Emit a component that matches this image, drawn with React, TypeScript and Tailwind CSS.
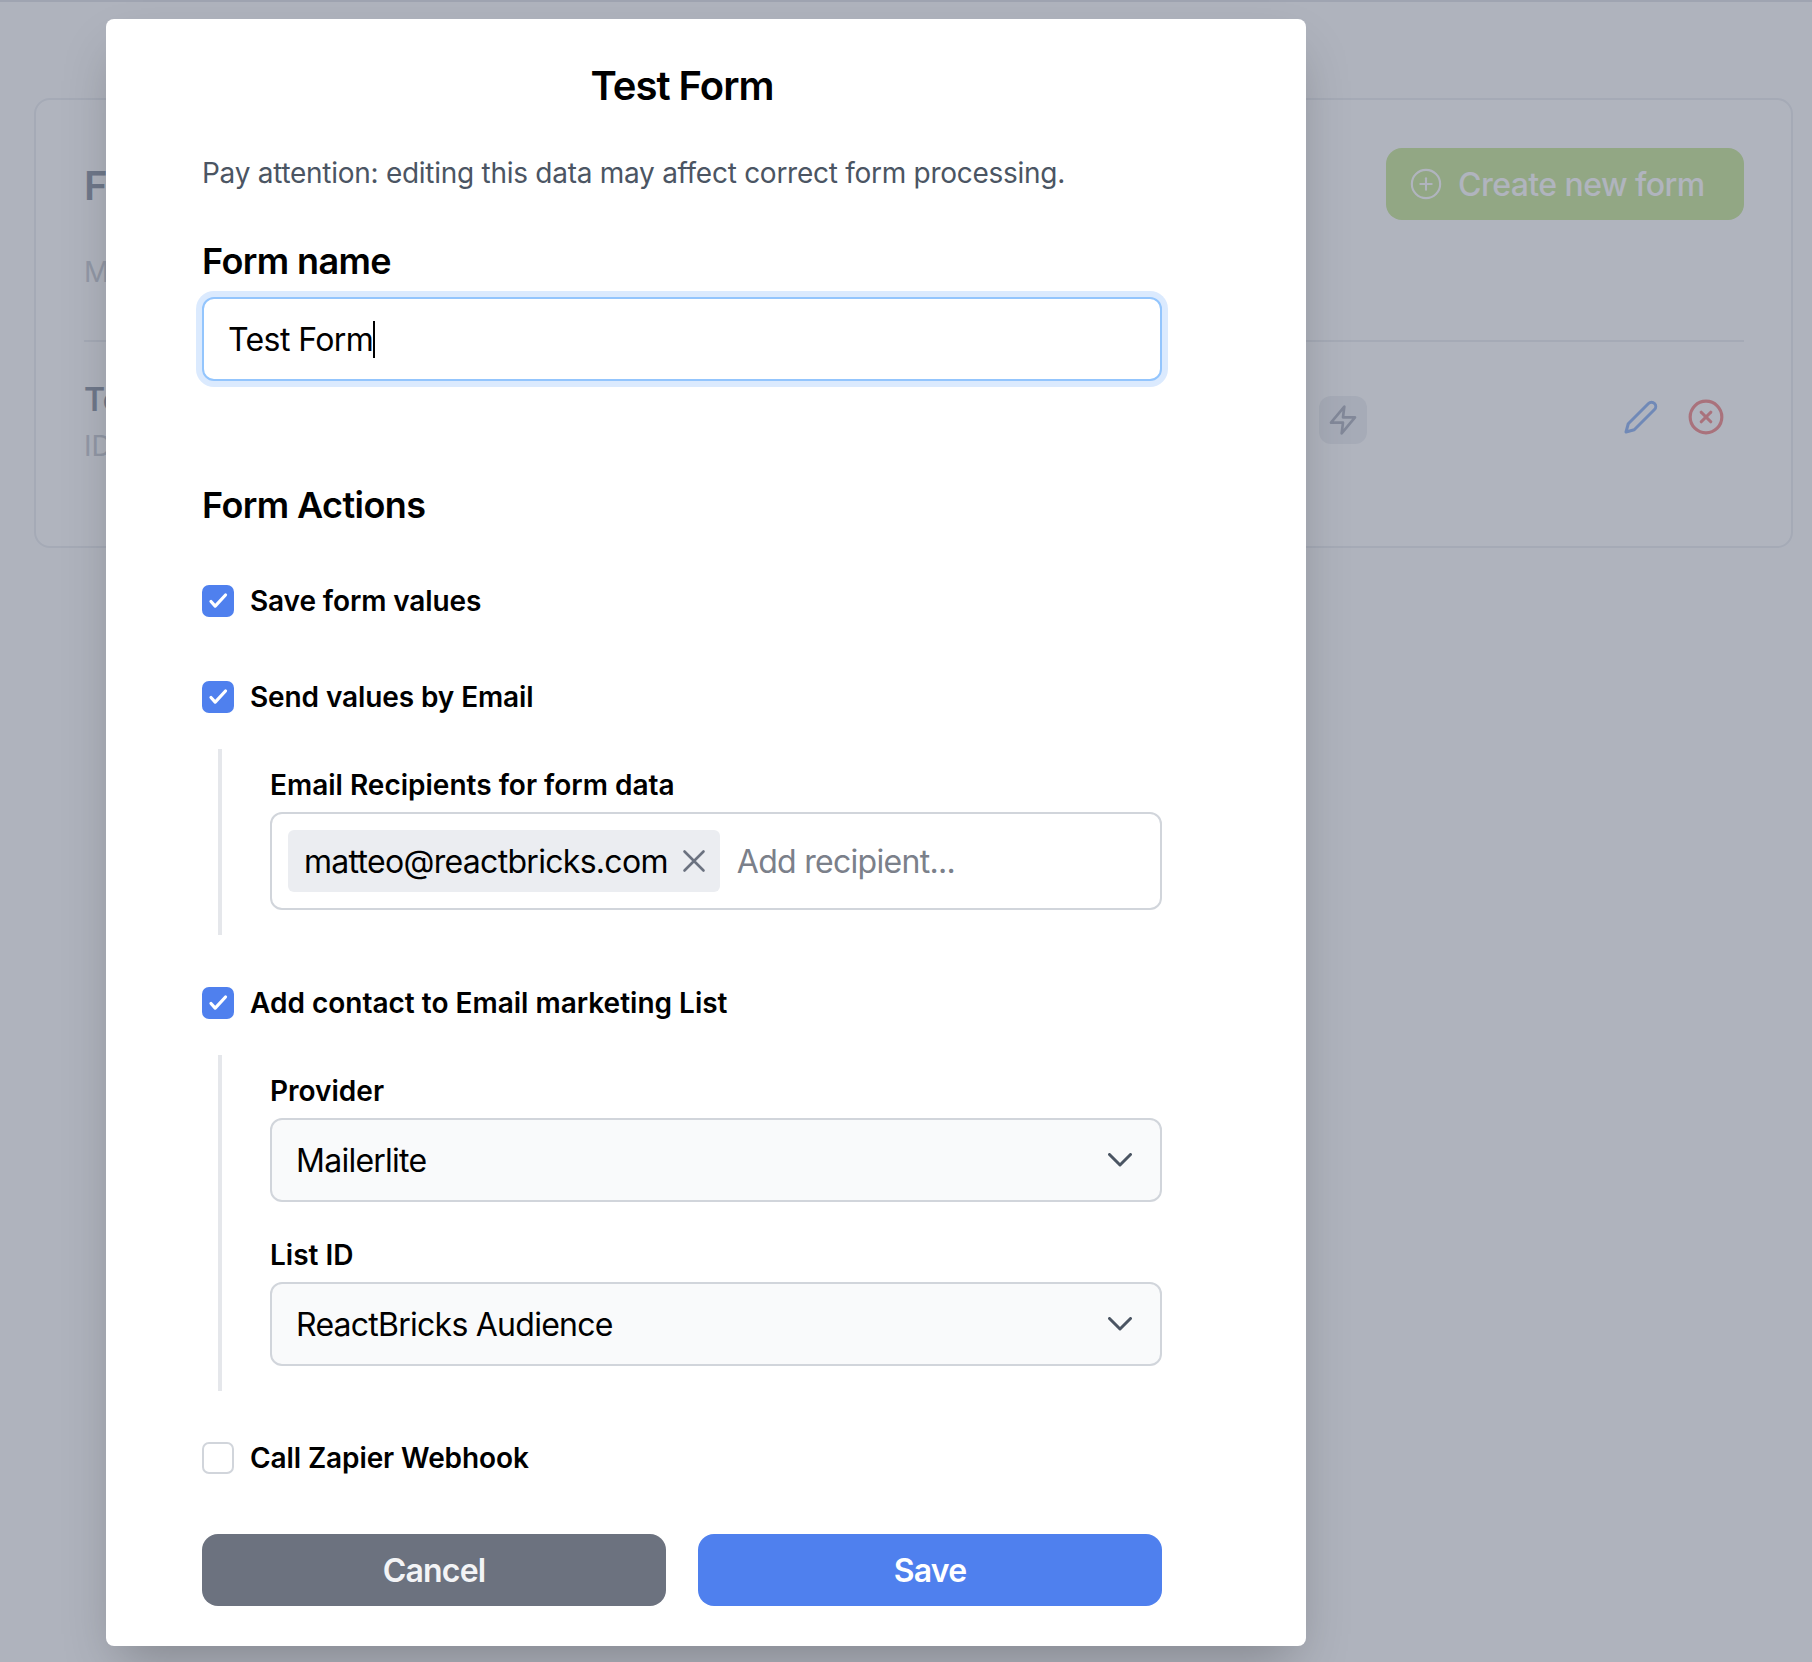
import React from "react";
import { CirclePlus, CircleX } from "lucide-react";

function Checkbox({ checked, label, wide }: { checked: boolean; label: string; wide?: boolean }) {
  return (
    <div className="flex items-center gap-[16px] h-[40px]">
      {checked ? (
        <div className="w-[32px] h-[32px] rounded-[7px] bg-[#4f80ee] flex items-center justify-center">
          <svg width="32" height="32" viewBox="0 0 32 32" fill="none">
            <path d="M9 16.5l4.2 4.6L23.5 10" stroke="#fff" strokeWidth="3.2" strokeLinecap="round" strokeLinejoin="round" />
          </svg>
        </div>
      ) : (
        <div className="w-[32px] h-[32px] rounded-[7px] bg-white border-2 border-[#d1d5db]" />
      )}
      <span className={wide ? "text-[28px] leading-[40px] font-semibold text-black" : "text-[28px] leading-[40px] font-semibold text-black tracking-[-0.1px]"}>{label}</span>
    </div>
  );
}

function SubLabel({ children }: { children: React.ReactNode }) {
  return <div className="text-[28px] leading-[40px] font-semibold text-black">{children}</div>;
}

function Select({ value }: { value: string }) {
  return (
    <div className="mt-[7px] h-[84px] rounded-[12px] border-2 border-[#d1d5db] bg-[#f9fafb] flex items-center justify-between pl-[24px] pr-[28px] text-[32px] tracking-[-0.75px] text-black">
      <span className="pt-[2px]">{value}</span>
      <svg width="24" height="14" viewBox="0 0 24 14" fill="none">
        <path d="M1.5 1.5L12 12L22.5 1.5" stroke="#4b5563" strokeWidth="3" strokeLinecap="round" strokeLinejoin="round" />
      </svg>
    </div>
  );
}

export default function App() {
  return (
    <div className="relative h-[1662px] overflow-hidden bg-[#fdfdfe] [font-family:Inter,sans-serif]">
      {/* page behind the dialog */}
      <div className="border-t-2 border-[#e5e7eb] pt-[96px] pl-[34px] pr-[19px]">
        <div className="h-[450px] rounded-[16px] border-2 border-[#eef0f3] bg-white pl-[48px] pr-[47px]">
          <div className="h-[242px] border-b-2 border-[#eef0f3] flex justify-between pt-[48px]">
            <div>
              <div className="text-[40px] leading-[48px] font-semibold text-[#9ca3af] mt-[14px]">Forms</div>
              <div className="text-[28px] leading-[40px] text-[#d1d5db] mt-[42px]">Manage</div>
            </div>
            <div className="w-[358px] h-[72px] rounded-[16px] bg-[#d1eba6] flex items-center pl-[23px] gap-[15px] text-white text-[32px] font-medium tracking-[-0.55px]">
              <CirclePlus size={34} strokeWidth={1.5} />
              <span className="pt-[2px]">Create new form</span>
            </div>
          </div>
          <div className="flex items-start pt-[38px]">
            <div className="w-[1235px]">
              <div className="text-[32px] leading-[40px] font-semibold text-[#9ca3af]">Test Form</div>
              <div className="text-[28px] leading-[40px] text-[#d1d5db] mt-[6px]">ID: test-form</div>
            </div>
            <div className="w-[48px] h-[48px] mt-[16px] rounded-[12px] bg-[#f0f2f5] flex items-center justify-center text-[#b8bcc6]">
              <svg width="32" height="32" viewBox="0 0 24 24" fill="none" stroke="currentColor" strokeWidth="2" strokeLinejoin="round" strokeLinecap="round">
                <polygon points="13 2 3 14 12 14 11 22 21 10 12 10 13 2" />
              </svg>
            </div>
            <div className="ml-[256px] mt-[18px] flex items-center gap-[28px]">
              <svg width="36" height="36" viewBox="0 0 24 24" fill="none" stroke="#9dbdf5" strokeWidth="2" strokeLinejoin="round" strokeLinecap="round">
                <path d="M17 3a2.828 2.828 0 1 1 4 4L7.5 20.5 2 22l1.5-5.5L17 3z" />
              </svg>
              <CircleX size={38} strokeWidth={2} className="text-[#f59a9a]" />
            </div>
          </div>
        </div>
      </div>

      {/* overlay */}
      <div className="absolute inset-0 bg-[#1d2945]/35" />

      {/* dialog */}
      <div className="absolute left-[106px] top-[19px] w-[1200px] h-[1627px] rounded-[8px] bg-white shadow-2xl pl-[96px] pt-[43px]">
        <div className="w-[960px]">
          <h1 className="text-[40px] leading-[48px] font-semibold text-black text-center tracking-[-1px]">Test Form</h1>
          <p className="mt-[43px] text-[28px] leading-[40px] text-[#4b5563] tracking-[-0.27px]">
            Pay attention: editing this data may affect correct form processing.
          </p>
          <div className="mt-[48px] text-[36px] leading-[40px] font-semibold text-black tracking-[-0.6px]">Form name</div>
          <div className="mt-[16px] h-[84px] rounded-[12px] border-2 border-[#93c5fd] ring-[6px] ring-[#dbeafe] bg-white flex items-center pl-[24px] text-[32px] text-black tracking-[-0.6px]">
            <span className="pt-[2px]">Test Form</span>
            <span className="w-[2px] h-[37px] bg-black" />
          </div>

          <h2 className="mt-[102px] text-[36px] leading-[44px] font-semibold text-black tracking-[-0.6px]">Form Actions</h2>

          <div className="mt-[54px]">
            <Checkbox checked label="Save form values" />
          </div>
          <div className="mt-[56px]">
            <Checkbox checked label="Send values by Email" />
          </div>
          <div className="mt-[32px] ml-[16px] border-l-4 border-[#e5e7eb] pl-[48px] pt-[16px] pb-[25px]">
            <SubLabel>Email Recipients for form data</SubLabel>
            <div className="mt-[7px] h-[98px] rounded-[12px] border-2 border-[#d1d5db] bg-white flex items-center pl-[16px] gap-[17px] text-[32px] tracking-[-0.7px]">
              <div className="h-[62px] rounded-[6px] bg-[#ebedf1] flex items-center pl-[16px] pr-[14px] gap-[14px] text-black">
                <span className="pt-[2px]">matteo@reactbricks.com</span>
                <svg width="24" height="24" viewBox="0 0 24 24" fill="none">
                  <path d="M2.5 2.5L21.5 21.5M21.5 2.5L2.5 21.5" stroke="#6b7280" strokeWidth="2.6" strokeLinecap="round" />
                </svg>
              </div>
              <span className="pt-[2px] text-[#7b808a]">Add recipient...</span>
            </div>
          </div>

          <div className="mt-[48px]">
            <Checkbox checked wide label="Add contact to Email marketing List" />
          </div>
          <div className="mt-[32px] ml-[16px] border-l-4 border-[#e5e7eb] pl-[48px] pt-[16px] pb-[25px]">
            <SubLabel>Provider</SubLabel>
            <Select value="Mailerlite" />
            <div className="mt-[33px]">
              <SubLabel>List ID</SubLabel>
            </div>
            <Select value="ReactBricks Audience" />
          </div>

          <div className="mt-[47px]">
            <Checkbox checked={false} label="Call Zapier Webhook" />
          </div>

          <div className="mt-[56px] grid grid-cols-2 gap-[32px]">
            <div className="h-[72px] rounded-[16px] bg-[#6c727f] flex items-center justify-center pt-[2px] text-[32px] font-semibold text-[#f3f4f6] tracking-[-0.8px]">Cancel</div>
            <div className="h-[72px] rounded-[16px] bg-[#4f80ee] flex items-center justify-center pt-[2px] text-[32px] font-semibold text-white tracking-[-0.8px]">Save</div>
          </div>
        </div>
      </div>
    </div>
  );
}
